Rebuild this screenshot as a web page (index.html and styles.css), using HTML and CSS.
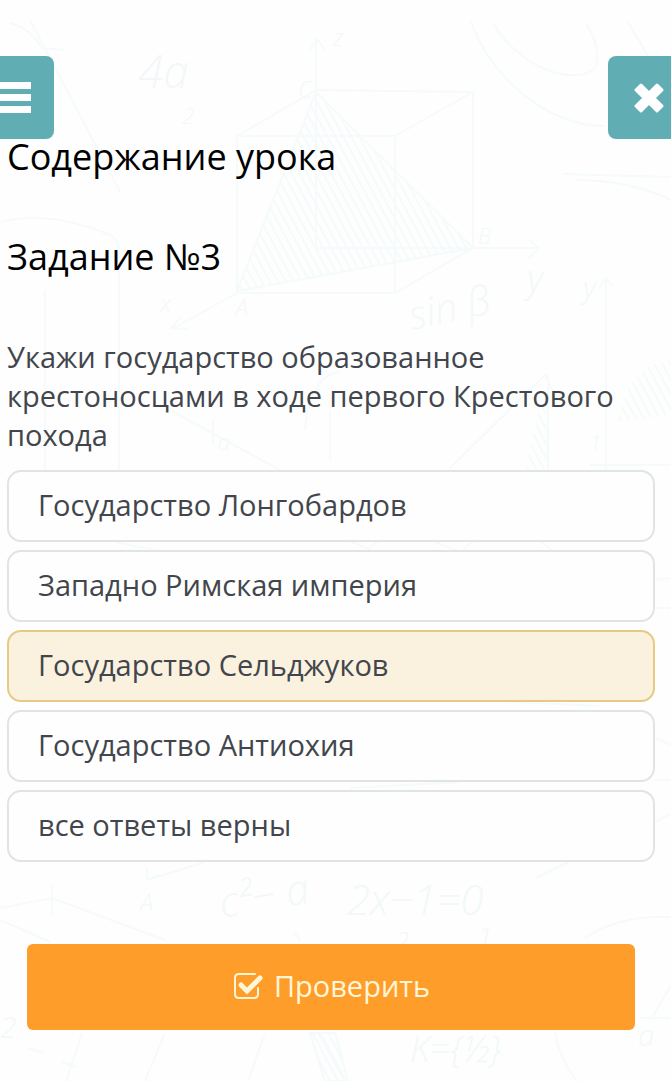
FILE: index.html
```html
<!DOCTYPE html>
<html lang="ru">
<head>
  <meta charset="UTF-8" />
  <meta name="viewport" content="width=device-width, initial-scale=1.0" />
  <title>Задание №3</title>
  <link rel="stylesheet" href="styles.css">
</head>
<body>
  <svg class="doodles" viewBox="0 0 671 1081" preserveAspectRatio="xMidYMin slice" aria-hidden="true">
    <defs>
      <pattern id="hatch" width="7" height="7" patternUnits="userSpaceOnUse" patternTransform="rotate(-28)">
        <path d="M1 0V7" />
      </pattern>
    </defs>
    <path d="M10 23Q30 28 42 48L64 50M30 20L120 192M0 222Q50 210 110 235Q119 240 119 250V480M45 290V470" />
    <!-- пирамида в кубе -->
    <path d="M316 250V40M310 50L317 39L325 50M316 90L473 92V248L395 293H237V136H395V293M395 136L473 92M237 136L316 90M316 248H538M529 240L539 248L529 258M237 293L172 329M180 318L171 328L188 329" />
    <path d="M316 92L473 248L237 291Z" fill="url(#hatch)" />
    <path d="M471 22C490 75 545 126 605 126M493 23C518 65 568 86 593 70Q605 55 586 23M628 22L648 56M563 174L671 177M575 180Q630 180 671 200" />
    <path d="M606 470V280M599 288L606 278L612 286M590 465H671" />
    <path d="M618 422Q630 360 671 362V415Z" fill="url(#hatch)" stroke="none" />
    <path d="M170 410L280 470M213 420V445M305 430Q310 375 340 372M330 410V460M450 468L545 375L552 390M548 375V470" />
    <path d="M545 385L525 470H548Z" fill="url(#hatch)" stroke="none" />
    <path d="M115 542L165 552M350 541L368 549L378 541M430 540L460 552L475 540M540 541L555 553M655 580L671 578M655 608H671M655 738L671 745M655 822L671 814M655 780H671M350 788L460 782M500 701L600 706" />
    <path d="M147 868V880L205 862M147 880L160 875M0 908L52 898L165 940M0 920L50 942M52 885V915M536 878L568 862M585 938Q620 915 671 917" />
    <path d="M82 1033L66 1081M165 1033L145 1081M265 1033L248 1081M28 1048L44 1053M62 1062L76 1067M300 940L294 932M310 1033L325 1081M318 1033L345 1081M555 1033Q560 1060 577 1081M640 1018H671M652 1018L671 985" />
    <path d="M310 1033H335L348 1081H325Z" fill="url(#hatch)" />
    <g class="formulas">
      <text x="138" y="88" font-size="46">4а</text>
      <text x="182" y="124" font-size="22">2</text>
      <text x="333" y="46" font-size="24">z</text>
      <text x="298" y="98" font-size="24">C</text>
      <text x="160" y="312" font-size="24">x</text>
      <text x="235" y="316" font-size="24">A</text>
      <text x="478" y="244" font-size="22">B</text>
      <text x="527" y="292" font-size="38">y</text>
      <text x="583" y="298" font-size="30">y</text>
      <text x="412" y="330" font-size="40" transform="rotate(-12 412 330)">sin β</text>
      <text x="218" y="450" font-size="22">α</text>
      <text x="590" y="450" font-size="20">1</text>
      <text x="140" y="911" font-size="24">A</text>
      <text x="222" y="918" font-size="42" transform="rotate(-10 222 918)">c²− a</text>
      <text x="347" y="915" font-size="42">2x−1=0</text>
      <text x="395" y="950" font-size="26">2</text>
      <text x="478" y="945" font-size="26">1</text>
      <text x="0" y="1038" font-size="30">2</text>
      <text x="410" y="1062" font-size="36">K={½}</text>
      <text x="638" y="1046" font-size="30">a</text>
    </g>
  </svg>

  <header class="topbar">
    <button type="button" class="menu-btn" aria-label="Меню">
      <svg width="31" height="31" viewBox="0 0 31 31"><path d="M0 0H31V7H0ZM0 12H31V19H0ZM0 24H31V31H0Z" /></svg>
    </button>
    <button type="button" class="close-btn" aria-label="Закрыть">
      <svg width="30" height="30" viewBox="0 0 30 30"><path d="M7 2L15 10L23 2L28 7L20 15L28 23L23 28L15 20L7 28L2 23L10 15L2 7Z" /></svg>
    </button>
  </header>

  <main class="lesson">
    <h1>Содержание урока</h1>
    <h2>Задание №3</h2>

    <form class="task">
      <fieldset class="answers">
        <legend>Укажи государство образованное крестоносцами в ходе первого Крестового похода</legend>
        <label class="answer"><input type="radio" name="answer" value="1" />Государство Лонгобардов</label>
        <label class="answer"><input type="radio" name="answer" value="2" />Западно Римская империя</label>
        <label class="answer"><input type="radio" name="answer" value="3" checked />Государство Сельджуков</label>
        <label class="answer"><input type="radio" name="answer" value="4" />Государство Антиохия</label>
        <label class="answer"><input type="radio" name="answer" value="5" />все ответы верны</label>
      </fieldset>
      <button type="button" class="check-btn">
        <svg width="32" height="28" viewBox="0 0 32 28">
          <path d="M23 2H7Q3 2 3 6V22Q3 26 7 26H22Q26 26 26 22V16" stroke-width="2" />
          <path d="M9 13L15 19L28 6" stroke-width="5" stroke-linejoin="miter" />
        </svg>
        Проверить
      </button>
    </form>
  </main>
</body>
</html>
```

FILE: styles.css
```css
* {
  margin: 0;
  padding: 0;
  box-sizing: border-box;
}
body {
  position: relative;
  min-height: 100vh;
  overflow-x: hidden;
  font-family: 'Open Sans', 'Noto Sans', sans-serif;
  font-size: 29px;
  line-height: 39px;
  background-color: #fefefe;
  color: #42464c;
}
/* рисунки на фоне */
.doodles {
  position: absolute;
  top: 0;
  left: 0;
  width: 100%;
  height: 100%;
  z-index: -1;
  fill: none;
  stroke: #f5fafb;
  stroke-width: 2;
}
.formulas {
  fill: #f2f8f9;
  stroke: none;
  font-style: italic;
  font-weight: 300;
}
.topbar {
  display: flex;
  justify-content: space-between;
  padding-top: 56px;
}
.topbar button {
  display: flex;
  align-items: center;
  height: 83px;
  border: none;
  background: #61adb4;
  cursor: pointer;
}
.menu-btn {
  width: 54px;
  border-radius: 0 8px 8px 0;
}
.menu-btn svg {
  fill: white;
}
.close-btn {
  width: 63px;
  padding-left: 26px;
  border-radius: 8px 0 0 8px;
}
.close-btn svg {
  fill: white;
  stroke: white;
  stroke-width: 3;
  stroke-linejoin: round;
}
.lesson {
  padding: 0 16px 48px 7px;
}
h1, h2 {
  font-size: 36px;
  font-weight: normal;
  line-height: 36px;
  color: #000;
}
h1 {
  margin-bottom: 64px;
}
h2 {
  margin-bottom: 62px;
}
.answers {
  display: flex;
  flex-direction: column;
  gap: 8px;
  border: none;
}
.answers legend {
  margin-bottom: 16px;
}
.answer {
  display: flex;
  align-items: center;
  min-height: 72px;
  padding: 0 29px 3px;
  border: 2px solid #e1e3e5;
  border-radius: 14px;
  background: #fefefe;
  cursor: pointer;
}
.answer input {
  appearance: none;
}
.answer:has(input:checked) {
  background: #faf2df;
  border-color: #e8c983;
}
.check-btn {
  display: flex;
  justify-content: center;
  align-items: center;
  gap: 10px;
  width: calc(100% - 40px);
  height: 86px;
  margin: 82px 20px 0;
  padding-bottom: 3px;
  border: none;
  border-radius: 6px;
  background: #ff9d2b;
  color: #fff6d8;
  font: inherit;
  cursor: pointer;
}
.check-btn svg {
  fill: none;
  stroke: #fff6d8;
  stroke-linecap: round;
  stroke-linejoin: round;
}
```
